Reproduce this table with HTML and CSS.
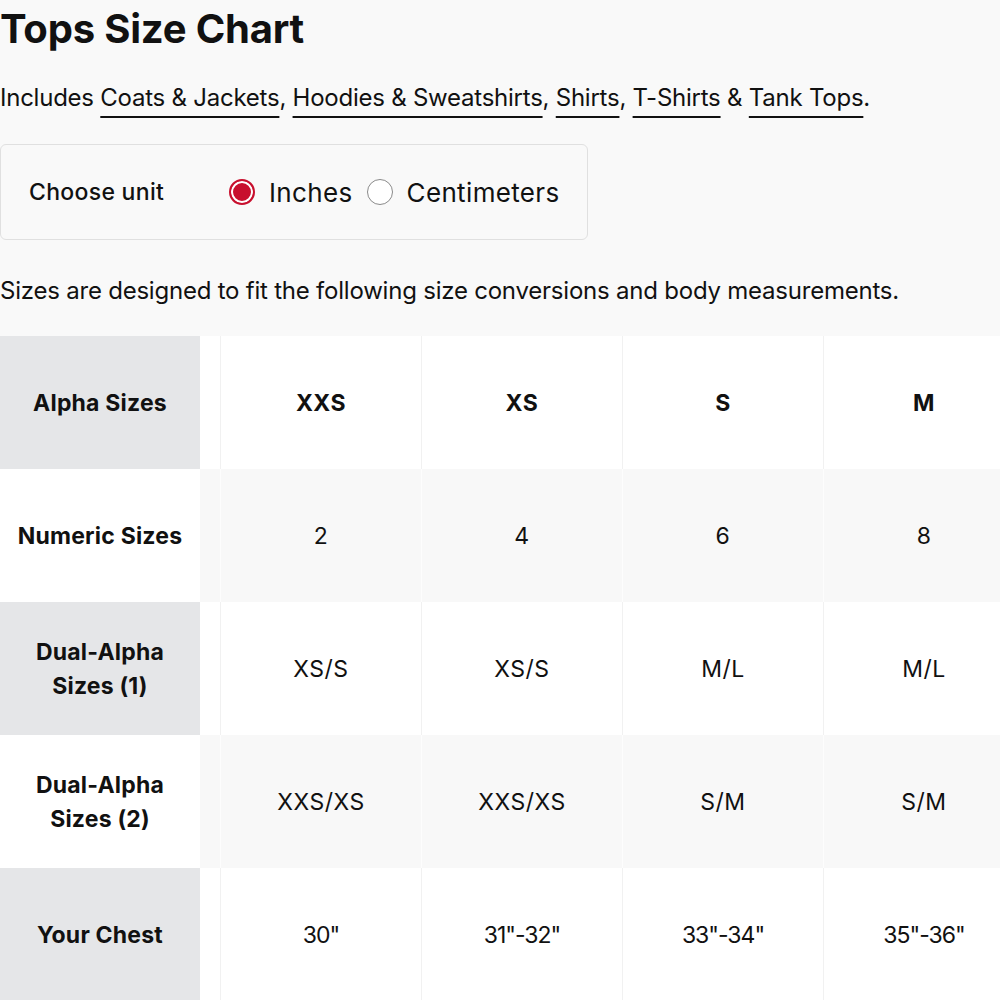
FILE: index.html
```html
<!DOCTYPE html>
<html lang="en">
<head>
<meta charset="utf-8">
<title>Tops Size Chart</title>
<link rel="stylesheet" href="styles.css">
</head>
<body>
<main class="page">
  <h1 class="title">Tops Size Chart</h1>
  <p class="includes">Includes <a href="#">Coats &amp; Jackets</a>, <a href="#">Hoodies &amp; Sweatshirts</a>, <a href="#">Shirts</a>, <a href="#">T-Shirts</a> &amp; <a href="#">Tank Tops</a>.</p>

  <div class="unit-box">
    <span class="unit-label">Choose unit</span>
    <div class="radios">
      <label class="radio"><span class="dot checked"></span>Inches</label>
      <label class="radio"><span class="dot"></span>Centimeters</label>
    </div>
  </div>

  <p class="note">Sizes are designed to fit the following size conversions and body measurements.</p>

  <div class="chart">
    <div class="row odd">
      <div class="head">Alpha Sizes</div><div class="spacer"></div>
      <div class="cell bold">XXS</div><div class="cell bold">XS</div><div class="cell bold">S</div><div class="cell bold">M</div>
    </div>
    <div class="row even">
      <div class="head">Numeric Sizes</div><div class="spacer"></div>
      <div class="cell">2</div><div class="cell">4</div><div class="cell">6</div><div class="cell">8</div>
    </div>
    <div class="row odd">
      <div class="head">Dual-Alpha<br>Sizes (1)</div><div class="spacer"></div>
      <div class="cell">XS/S</div><div class="cell">XS/S</div><div class="cell">M/L</div><div class="cell">M/L</div>
    </div>
    <div class="row even">
      <div class="head">Dual-Alpha<br>Sizes (2)</div><div class="spacer"></div>
      <div class="cell">XXS/XS</div><div class="cell">XXS/XS</div><div class="cell">S/M</div><div class="cell">S/M</div>
    </div>
    <div class="row odd">
      <div class="head">Your Chest</div><div class="spacer"></div>
      <div class="cell tight">30"</div><div class="cell tight">31"-32"</div><div class="cell tight">33"-34"</div><div class="cell tight">35"-36"</div>
    </div>
  </div>
</main>
</body>
</html>
```

FILE: styles.css
```css
html, body {
  margin: 0;
  padding: 0;
  background: #f9f9f9;
  overflow: hidden;
}

body {
  font-family: Inter, "Liberation Sans", sans-serif;
  color: #111;
  width: 1000px;
  height: 1000px;
}

.page {
  display: flex;
  flex-direction: column;
}

.title {
  margin: 0;
  padding-top: 5px;
  font-size: 40px;
  line-height: 48px;
  font-weight: 700;
  letter-spacing: -0.2px;
}

.includes {
  margin: 22px 0 0;
  font-size: 24px;
  line-height: 46px;
  letter-spacing: -0.24px;
}

.includes a {
  color: #111;
  text-decoration: underline;
  text-decoration-thickness: 2px;
  text-underline-offset: 10px;
}

.unit-box {
  margin-top: 23px;
  width: 586px;
  height: 94px;
  border: 1px solid #e0e0e0;
  border-radius: 6px;
  display: flex;
  align-items: center;
  box-sizing: content-box;
}

.unit-label {
  margin-left: 28px;
  width: 200px;
  font-size: 23px;
  font-weight: 500;
  letter-spacing: 0.3px;
}

.radios {
  display: flex;
  gap: 14px;
}

.radio {
  display: flex;
  align-items: center;
  gap: 14px;
  font-size: 26px;
  letter-spacing: 0.35px;
}

.dot {
  width: 26px;
  height: 26px;
  border-radius: 50%;
  border: 1px solid #8a8a8a;
  background: #fff;
  box-sizing: border-box;
}

.dot.checked {
  border: 2px solid #c8102e;
  background: #c8102e;
  box-shadow: inset 0 0 0 2px #fff;
}

.note {
  margin: 36px 0 0;
  font-size: 24px;
  line-height: 30px;
  letter-spacing: -0.22px;
}

.chart {
  margin-top: 30px;
  display: flex;
  flex-direction: column;
  width: 1024px;
}

.row {
  display: grid;
  grid-template-columns: 200px 20px repeat(4, 201px);
  height: 133px;
}

.head,
.cell {
  display: flex;
  align-items: center;
  justify-content: center;
  text-align: center;
  font-size: 23px;
  line-height: 34px;
}

.head {
  font-weight: 700;
  letter-spacing: 0.2px;
}

.cell {
  border-left: 1px solid #f1f1f1;
  letter-spacing: 0.5px;
}

.cell.tight {
  letter-spacing: -1px;
}

.cell.bold {
  font-weight: 700;
}

.row.odd .head { background: #e5e6e8; }
.row.odd .spacer,
.row.odd .cell { background: #fff; }

.row.even .head { background: #fff; }
.row.even .spacer,
.row.even .cell { background: #f8f8f8; }
.row.even .cell { border-left-color: #fdfdfd; }
```
